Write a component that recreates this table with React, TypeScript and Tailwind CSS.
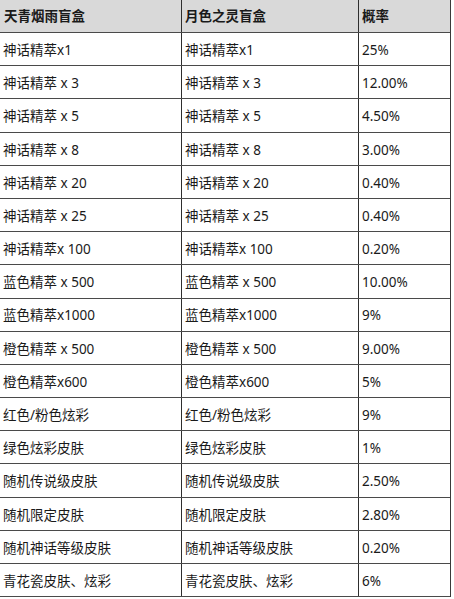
import React from 'react';

const ROWS: [string, string, string][] = [
  ['神话精萃x1', '神话精萃x1', '25%'],
  ['神话精萃 x 3', '神话精萃 x 3', '12.00%'],
  ['神话精萃 x 5', '神话精萃 x 5', '4.50%'],
  ['神话精萃 x 8', '神话精萃 x 8', '3.00%'],
  ['神话精萃 x 20', '神话精萃 x 20', '0.40%'],
  ['神话精萃 x 25', '神话精萃 x 25', '0.40%'],
  ['神话精萃x 100', '神话精萃x 100', '0.20%'],
  ['蓝色精萃 x 500', '蓝色精萃 x 500', '10.00%'],
  ['蓝色精萃x1000', '蓝色精萃x1000', '9%'],
  ['橙色精萃 x 500', '橙色精萃 x 500', '9.00%'],
  ['橙色精萃x600', '橙色精萃x600', '5%'],
  ['红色/粉色炫彩', '红色/粉色炫彩', '9%'],
  ['绿色炫彩皮肤', '绿色炫彩皮肤', '1%'],
  ['随机传说级皮肤', '随机传说级皮肤', '2.50%'],
  ['随机限定皮肤', '随机限定皮肤', '2.80%'],
  ['随机神话等级皮肤', '随机神话等级皮肤', '0.20%'],
  ['青花瓷皮肤、炫彩', '青花瓷皮肤、炫彩', '6%'],
];

const font = {
  fontFamily: '"Noto Sans", "Noto Sans CJK SC", sans-serif',
};

export default function App() {
  return (
    <div className="w-[454px] h-[599px] bg-white overflow-hidden" style={font}>
      <div className="w-[451px] border-r border-[#3a3a3a] text-[13.5px] text-[#1a1a1a]">
        {/* 表头 */}
        <div className="flex h-[33px] bg-[#d9d9d9] border-b border-[#4a4a4a] font-bold">
          <div className="w-[182px] flex items-center pl-[4px] pt-[1px] border-r border-[#2e2e2e]">
            天青烟雨盲盒
          </div>
          <div className="w-[177px] flex items-center pl-[3px] pt-[1px] border-r border-[#2e2e2e]">
            月色之灵盲盒
          </div>
          <div className="flex-1 flex items-center pl-[3px] pt-[1px]">概率</div>
        </div>

        {ROWS.map(([a, b, c], i) => (
          <div key={i} className="flex h-[33.2px] border-b border-[#4a4a4a]">
            <div className="w-[182px] flex items-center pl-[3px] pt-[2px] border-r border-[#2e2e2e]">
              {a}
            </div>
            <div className="w-[177px] flex items-center pl-[3px] pt-[2px] border-r border-[#2e2e2e]">
              {b}
            </div>
            <div className="flex-1 flex items-center pl-[3px] pt-[2px]">{c}</div>
          </div>
        ))}
      </div>
    </div>
  );
}
